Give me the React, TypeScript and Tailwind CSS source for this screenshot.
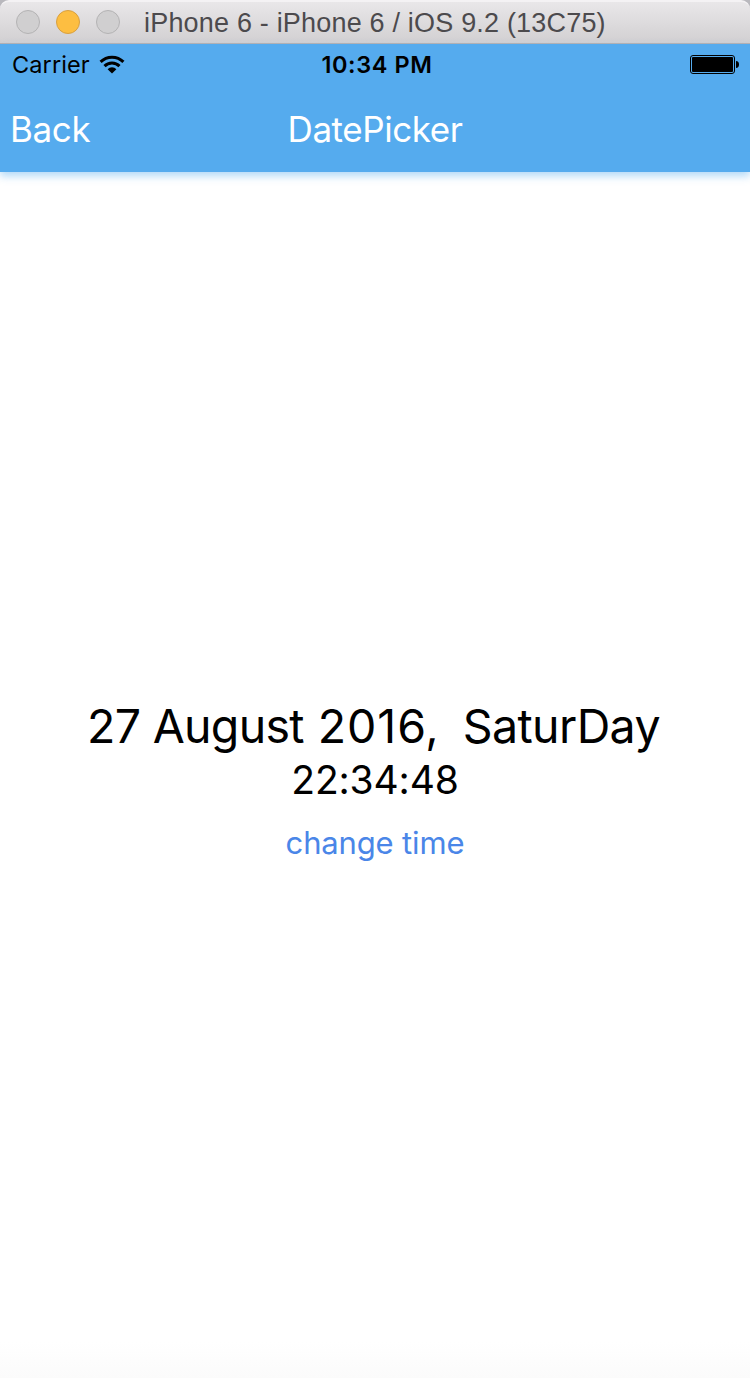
function WindowBar() {
  return (
    <div className="bg-[#b9b8bd]">
      <div className="flex h-[44px] items-center rounded-t-[9px] border-t-2 border-[#f4f2f4] bg-linear-to-b from-[#e9e7e9] to-[#d1cfd1] pl-4 shadow-[inset_0_-1px_0_#b6b0b2]">
        <div className="-mt-[2px] flex gap-4">
          <span className="h-6 w-6 rounded-full border border-[#b4b3b4] bg-[#d0cfd0]" />
          <span className="h-6 w-6 rounded-full border border-[#d9a040] bg-[#fdbe41]" />
          <span className="h-6 w-6 rounded-full border border-[#b4b3b4] bg-[#d0cfd0]" />
        </div>
        <span className="ml-6 font-['Liberation_Sans',sans-serif] text-[27px] leading-[30px] tracking-[0.19px] whitespace-nowrap text-[#4c4a4d]">
          iPhone 6 - iPhone 6 / iOS 9.2 (13C75)
        </span>
      </div>
    </div>
  );
}

function Wifi() {
  return (
    <svg width="26" height="20" viewBox="0 0 26 20" fill="none" stroke="black" strokeWidth="3">
      <path d="M1.6 6.9 A16 16 0 0 1 24.4 6.9" />
      <path d="M5.5 11.1 A10.5 10.5 0 0 1 20.5 11.1" />
      <path d="M8.6 14.2 A6.2 6.2 0 0 1 17.4 14.2 L13 18.6 Z" fill="black" stroke="none" />
    </svg>
  );
}

function Battery() {
  return (
    <svg width="49" height="19" viewBox="0 0 49 19">
      <rect x="0.5" y="0.5" width="44" height="18" rx="2.5" fill="none" stroke="black" />
      <rect x="2" y="2" width="41" height="15" rx="1" fill="black" />
      <path d="M46 6 Q49 6.4 49 9.5 Q49 12.6 46 13 Z" fill="black" />
    </svg>
  );
}

function StatusBar() {
  return (
    <div className="grid h-[42px] grid-cols-3 items-center pr-[11px] pb-px pl-3 text-black">
      <div className="flex items-center">
        <span className="text-[23.5px] leading-7 tracking-[0.1px]">Carrier</span>
        <span className="ml-[9px]">
          <Wifi />
        </span>
      </div>
      <span className="pl-[3px] text-center text-[23.5px] leading-7 font-semibold tracking-[0.6px] whitespace-nowrap">
        10:34 PM
      </span>
      <div className="flex justify-end">
        <Battery />
      </div>
    </div>
  );
}

function NavBar() {
  return (
    <div className="grid h-[86px] grid-cols-3 items-center px-[10px] text-[35px] font-normal text-white">
      <span className="tracking-[-0.35px]">Back</span>
      <span className="text-center tracking-[-0.45px]">DatePicker</span>
    </div>
  );
}

export default function App() {
  return (
    <div className="flex h-[1378px] w-[750px] flex-col overflow-hidden bg-white font-['Inter',sans-serif]">
      <WindowBar />
      <header className="relative z-10 bg-[#55abee] shadow-[0_4px_8px_rgba(85,171,238,0.45)]">
        <StatusBar />
        <NavBar />
      </header>
      <main className="flex flex-1 flex-col items-center bg-linear-to-b from-white from-97% to-[#fbfbfb] pt-[525px] text-black">
        <div className="pr-[3px] text-[46.5px] leading-[58px] whitespace-pre">
          <span className="tracking-[-0.7px]">27 August</span>
          <span className="tracking-[0.9px]"> 2016,</span>
          <span className="tracking-[-1.5px]">{"  "}</span>
          <span className="tracking-[-0.6px]">SaturDay</span>
        </div>
        <div className="mt-0 text-[39px] leading-[49px] tracking-[-0.15px]">22:34:48</div>
        <button className="mt-[19px] text-[31px] leading-[39px] tracking-[-0.15px] text-[#4a86e8]">change time</button>
      </main>
    </div>
  );
}
